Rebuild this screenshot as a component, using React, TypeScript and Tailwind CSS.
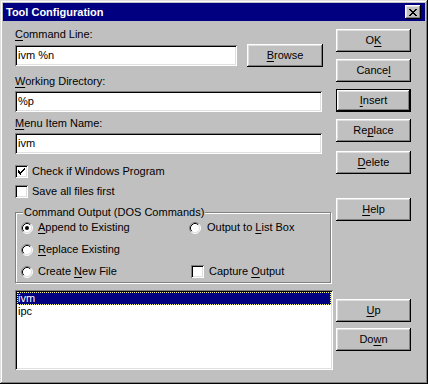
import React from "react";

const raised =
  "shadow-[inset_-1px_-1px_0_#000000,inset_1px_1px_0_#ffffff,inset_-2px_-2px_0_#808080,inset_2px_2px_0_#dfdfdf]";
const raisedDefault =
  "shadow-[inset_0_0_0_1px_#000000,inset_-2px_-2px_0_#000000,inset_2px_2px_0_#ffffff,inset_-3px_-3px_0_#808080,inset_3px_3px_0_#dfdfdf]";
const sunken =
  "shadow-[inset_1px_1px_0_#808080,inset_-1px_-1px_0_#ffffff,inset_2px_2px_0_#000000,inset_-2px_-2px_0_#dfdfdf]";

const Key = ({ children }: { children: React.ReactNode }) => (
  <span className="underline underline-offset-[2px]">{children}</span>
);

const Button = ({
  children,
  isDefault,
  className = "",
}: {
  children: React.ReactNode;
  isDefault?: boolean;
  className?: string;
}) => (
  <div
    className={`flex h-[23px] w-[75px] items-center justify-center bg-[#c0c0c0] text-black ${
      isDefault ? raisedDefault : raised
    } ${className}`}
  >
    {children}
  </div>
);

const TextBox = ({ value, className = "" }: { value: string; className?: string }) => (
  <div className={`flex h-[21px] items-center bg-white pl-[3px] text-black ${sunken} ${className}`}>
    {value}
  </div>
);

const CheckBox = ({ checked }: { checked?: boolean }) => (
  <div className={`flex h-[13px] w-[13px] shrink-0 items-center justify-center bg-white ${sunken}`}>
    {checked && (
      <svg width="7" height="7" viewBox="0 0 7 7" shapeRendering="crispEdges">
        <path
          d="M6 0h1v1h-1zM5 1h2v1h-2zM0 2h1v1h-1zM4 2h2v1h-2zM0 3h2v1h-2zM3 3h2v1h-2zM0 4h4v1h-4zM1 5h2v1h-2zM2 6h1v1h-1z"
          fill="#000"
        />
      </svg>
    )}
  </div>
);

const Radio = ({ checked }: { checked?: boolean }) => (
  <svg width="12" height="12" viewBox="0 0 12 12" className="shrink-0">
    <circle cx="6" cy="6" r="5" fill="#ffffff" />
    <path d="M2.11 9.89 A5.5 5.5 0 0 1 9.89 2.11" stroke="#808080" fill="none" />
    <path d="M9.89 2.11 A5.5 5.5 0 0 1 2.11 9.89" stroke="#ffffff" fill="none" />
    <path d="M2.82 9.18 A4.5 4.5 0 0 1 9.18 2.82" stroke="#000000" fill="none" />
    <path d="M9.18 2.82 A4.5 4.5 0 0 1 2.82 9.18" stroke="#dfdfdf" fill="none" />
    {checked && <circle cx="6" cy="6" r="2" fill="#000" />}
  </svg>
);

const App = () => {
  return (
    <div
      className={`flex h-[384px] w-[428px] flex-col bg-[#c0c0c0] p-[3px] font-['Liberation_Sans',Arial,sans-serif] text-[11px] leading-[13px] text-black shadow-[inset_-1px_-1px_0_#000000,inset_1px_1px_0_#dfdfdf,inset_-2px_-2px_0_#808080,inset_2px_2px_0_#ffffff]`}
    >
      {/* title bar */}
      <div className="flex h-[18px] items-center justify-between bg-[#000080] pl-[3px] pr-[4px]">
        <span className="font-bold text-white">Tool Configuration</span>
        <div className={`flex h-[14px] w-[16px] items-center justify-center bg-[#c0c0c0] ${raised}`}>
          <svg width="8" height="7" viewBox="0 0 8 7" shapeRendering="crispEdges">
            <path
              d="M0 0h2v1h-2zM6 0h2v1h-2zM1 1h2v1h-2zM5 1h2v1h-2zM2 2h4v1h-4zM3 3h2v1h-2zM2 4h4v1h-4zM1 5h2v1h-2zM5 5h2v1h-2zM0 6h2v1h-2zM6 6h2v1h-2z"
              fill="#000"
            />
          </svg>
        </div>
      </div>

      <div className="flex pl-[12px]">
        {/* left column */}
        <div className="flex w-[319px] flex-col">
          <div className="mt-[7px]">
            <Key>C</Key>ommand Line:
          </div>
          <div className="mt-[3px] flex items-center">
            <TextBox value="ivm %n" className="w-[222px]" />
            <Button className="ml-[10px] w-[76px]">
              <Key>B</Key>rowse
            </Button>
          </div>

          <div className="mt-[8px]">
            <Key>W</Key>orking Directory:
          </div>
          <TextBox value="%p" className="mt-[3px] w-[307px]" />

          <div className="mt-[5px]">
            <Key>M</Key>enu Item Name:
          </div>
          <TextBox value="ivm" className="mt-[3px] w-[307px]" />

          <div className="mt-[11px] flex items-center gap-[4px]">
            <CheckBox checked />
            <span>Check if Windows Program</span>
          </div>
          <div className="mt-[7px] flex items-center gap-[4px]">
            <CheckBox />
            <span>Save all files first</span>
          </div>

          {/* group box */}
          <div className="relative mt-[14px] h-[71px] w-[316px] border border-[#808080] shadow-[1px_1px_0_#ffffff,inset_1px_1px_0_#ffffff]">
            <span className="absolute left-[7px] top-[-7px] bg-[#c0c0c0] px-[1px]">
              Command Output (DOS Commands)
            </span>
            <div className="grid grid-cols-[168px_1fr] gap-y-[9px] pl-[5px] pt-[8px]">
              <div className="flex items-center gap-[5px]">
                <Radio checked />
                <span>
                  <Key>A</Key>ppend to Existing
                </span>
              </div>
              <div className="flex items-center gap-[6px]">
                <Radio />
                <span>
                  Output to <Key>L</Key>ist Box
                </span>
              </div>
              <div className="flex items-center gap-[5px]">
                <Radio />
                <span>
                  <Key>R</Key>eplace Existing
                </span>
              </div>
              <div />
              <div className="flex items-center gap-[5px]">
                <Radio />
                <span>
                  Create <Key>N</Key>ew File
                </span>
              </div>
              <div className="ml-[2px] flex items-center gap-[5px]">
                <CheckBox />
                <span>
                  Capture <Key>O</Key>utput
                </span>
              </div>
            </div>
          </div>

          {/* list box */}
          <div className={`mt-[7px] h-[80px] w-[318px] bg-white p-[2px] ${sunken}`}>
            <div className="h-[13px] bg-[#000080] pl-[1px] text-white outline outline-1 -outline-offset-1 outline-dotted outline-[#ffff80]">
              ivm
            </div>
            <div className="h-[13px] pl-[1px]">ipc</div>
          </div>
        </div>

        {/* right column */}
        <div className="ml-[2px] flex w-[75px] flex-col">
          <Button className="mt-[8px]">
            O<Key>K</Key>
          </Button>
          <Button className="mt-[7px]">
            Cance<Key>l</Key>
          </Button>
          <Button className="mt-[7px]" isDefault>
            <Key>I</Key>nsert
          </Button>
          <Button className="mt-[7px]">
            Re<Key>p</Key>lace
          </Button>
          <Button className="mt-[9px]">
            <Key>D</Key>elete
          </Button>
          <Button className="mt-[24px]">
            <Key>H</Key>elp
          </Button>
          <Button className="mt-[78px]">
            <Key>U</Key>p
          </Button>
          <Button className="mt-[6px]">
            Do<Key>w</Key>n
          </Button>
        </div>
      </div>
    </div>
  );
};

export default App;
